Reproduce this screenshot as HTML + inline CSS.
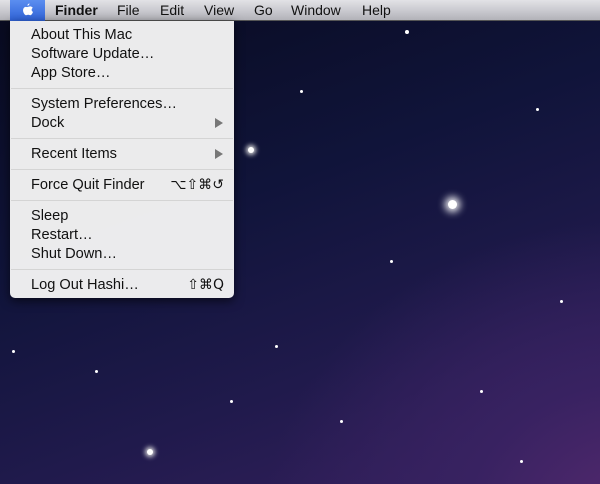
<!DOCTYPE html>
<html><head><style>
*{margin:0;padding:0;box-sizing:border-box}
body{width:600px;height:484px;overflow:hidden;position:relative;font-family:"Liberation Sans",sans-serif;
background:radial-gradient(ellipse 500px 400px at 640px 520px,#55296f 0%,#382261 35%,transparent 75%),linear-gradient(160deg,#080a1e 0%,#10143a 40%,#201a4c 70%,#36205e 100%);}
.bar{position:absolute;left:0;top:0;width:600px;height:21px;background:linear-gradient(#e2e2e6,#c6c6cc 60%,#b2b2b8);border-bottom:1px solid #555;font-size:14px;color:#111}
.bar span{position:absolute;top:2px}
.apple{position:absolute;left:10px;top:0;width:35px;height:21px;background:linear-gradient(#5b8ef0,#2f62d6)}
.menu{position:absolute;left:10px;top:21px;width:224px;height:277px;background:rgba(243,243,243,0.97);border-radius:0 0 5px 5px;box-shadow:0 3px 10px rgba(0,0,0,.6);font-size:14.6px;color:#111}
.it{position:absolute;left:21px;line-height:19px;margin-top:1px}
.r{position:absolute;right:10px;line-height:19px;margin-top:1px}
.sep{position:absolute;left:1px;right:1px;height:1px;background:#d4d4d4}
.tri{position:absolute;right:11px;width:0;height:0;border-left:8px solid #777;border-top:5px solid transparent;border-bottom:5px solid transparent}
.s{position:absolute;border-radius:50%;background:#fff}
</style></head><body>
<div class="s" style="left:448px;top:200px;width:9px;height:9px;box-shadow:0 0 8px 3px #fff"></div>
<div class="s" style="left:248px;top:147px;width:6px;height:6px;box-shadow:0 0 5px 2px #ddd"></div>
<div class="s" style="left:147px;top:449px;width:6px;height:6px;box-shadow:0 0 5px 2px #ddd"></div>
<div class="s" style="left:405px;top:30px;width:4px;height:4px"></div>
<div class="s" style="left:536px;top:108px;width:3px;height:3px"></div>
<div class="s" style="left:12px;top:350px;width:3px;height:3px"></div>
<div class="s" style="left:95px;top:370px;width:3px;height:3px"></div>
<div class="s" style="left:275px;top:345px;width:3px;height:3px"></div>
<div class="s" style="left:340px;top:420px;width:3px;height:3px"></div>
<div class="s" style="left:480px;top:390px;width:3px;height:3px"></div>
<div class="s" style="left:560px;top:300px;width:3px;height:3px"></div>
<div class="s" style="left:390px;top:260px;width:3px;height:3px"></div>
<div class="s" style="left:300px;top:90px;width:3px;height:3px"></div>
<div class="s" style="left:520px;top:460px;width:3px;height:3px"></div>
<div class="s" style="left:230px;top:400px;width:3px;height:3px"></div>
<div class="bar">
<div class="apple"><svg width="35" height="21" viewBox="0 0 35 21"><path d="M17.5 7c1-.1 2.3-.8 3.4-.5 1 .3 1.6.9 1.9 1.4-1.6.9-1.5 3.3.2 4-.4 1.3-1.5 3.3-2.6 3.3-.9 0-1.1-.5-2.2-.5s-1.4.5-2.2.5c-1.2 0-2.7-2.4-2.9-4.3-.2-2.2 1.1-4 2.6-4 .7 0 1.3.3 1.8.1z M19.5 3.5c0 1.1-.9 2.2-2 2.2-.1-1.1.9-2.2 2-2.2z" fill="#fff"/></svg></div>
<span style="left:55px;font-weight:bold">Finder</span>
<span style="left:117px">File</span>
<span style="left:160px">Edit</span>
<span style="left:204px">View</span>
<span style="left:254px">Go</span>
<span style="left:291px">Window</span>
<span style="left:362px">Help</span>
</div>
<div class="menu">
<div class="it" style="top:4px">About This Mac</div>
<div class="it" style="top:23px">Software Update…</div>
<div class="it" style="top:42px">App Store…</div>
<div class="sep" style="top:67px"></div>
<div class="it" style="top:73px">System Preferences…</div>
<div class="it" style="top:92px">Dock</div><div class="tri" style="top:97px"></div>
<div class="sep" style="top:117px"></div>
<div class="it" style="top:123px">Recent Items</div><div class="tri" style="top:128px"></div>
<div class="sep" style="top:148px"></div>
<div class="it" style="top:154px">Force Quit Finder</div><div class="r" style="top:154px;font-family:'DejaVu Sans',sans-serif;font-size:14px">⌥⇧⌘↺</div>
<div class="sep" style="top:179px"></div>
<div class="it" style="top:185px">Sleep</div>
<div class="it" style="top:204px">Restart…</div>
<div class="it" style="top:223px">Shut Down…</div>
<div class="sep" style="top:248px"></div>
<div class="it" style="top:254px">Log Out Hashi…</div><div class="r" style="top:254px;font-family:'DejaVu Sans',sans-serif;font-size:14px">⇧⌘Q</div>
</div>
</body></html>
